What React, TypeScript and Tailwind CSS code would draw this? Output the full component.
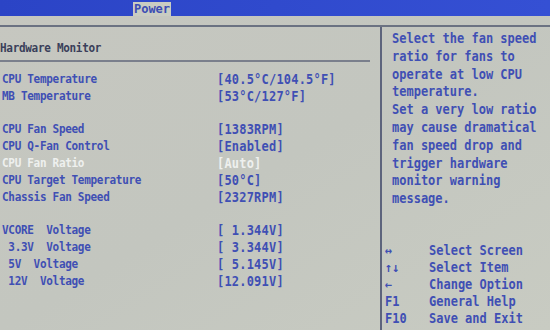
const rows: ([string, string, boolean?] | null)[] = [
  ['CPU Temperature', '[40.5°C/104.5°F]'],
  ['MB Temperature', '[53°C/127°F]'],
  null,
  ['CPU Fan Speed', '[1383RPM]'],
  ['CPU Q-Fan Control', '[Enabled]'],
  ['CPU Fan Ratio', '[Auto]', true],
  ['CPU Target Temperature', '[50°C]'],
  ['Chassis Fan Speed', '[2327RPM]'],
  null,
  ['VCORE  Voltage', '[ 1.344V]'],
  [' 3.3V  Voltage', '[ 3.344V]'],
  [' 5V  Voltage', '[ 5.145V]'],
  [' 12V  Voltage', '[12.091V]'],
];

const help = [
  'Select the fan speed',
  'ratio for fans to',
  'operate at low CPU',
  'temperature.',
  'Set a very low ratio',
  'may cause dramatical',
  'fan speed drop and',
  'trigger hardware',
  'monitor warning',
  'message.',
];

const keys: [string, string][] = [
  ['↔', 'Select Screen'],
  ['↑↓', 'Select Item'],
  ['←', 'Change Option'],
  ['F1', 'General Help'],
  ['F10', 'Save and Exit'],
];

export default function App() {
  return (
    <div
      className="w-[550px] h-[330px] overflow-hidden flex flex-col bg-gradient-to-br from-[#c6c7c0] via-[#c3c6bf] to-[#c8cbc2] text-[#3f4fb4] font-bold"
      style={{ fontFamily: '"DejaVu Sans Mono", "Liberation Mono", monospace' }}
    >
      {/* menu bar */}
      <div className="h-[16px] bg-gradient-to-r from-[#2b44c6] to-[#3550d4] flex">
        <div className="ml-[133px] w-[38px] mt-[2px] bg-[#c9ccc2] text-[#3c4db4] text-[12px] leading-[14px] text-center">
          Power
        </div>
      </div>
      <div className="mt-[9px] h-[2px] bg-[#6b7282]" />

      <div className="flex flex-1">
        {/* left panel */}
        <div className="w-[380px] flex flex-col">
          <div className="pt-[12px] text-[11px] leading-[17px] tracking-[-0.3px] text-[#3a3f5a] scale-y-110 origin-left">
            Hardware Monitor
          </div>
          <div className="mt-[4px] mr-[10px] h-[2px] bg-[#7a7f8c]" />
          <div className="mt-[10px] flex flex-col">
            {rows.map((r, i) =>
              r ? (
                <div key={i} className={`flex h-[16.8px] items-center scale-y-110 ${r[2] ? 'text-[#eef0ee]' : ''}`}>
                  <span className="w-[217px] pl-[2px] text-[11px] tracking-[-0.3px] whitespace-pre">{r[0]}</span>
                  <span className="text-[12px] tracking-[0.2px] whitespace-pre">{r[1]}</span>
                </div>
              ) : (
                <div key={i} className="h-[16.8px]" />
              ),
            )}
          </div>
        </div>

        <div className="w-[2px] bg-[#5d647c]" />

        {/* help panel */}
        <div className="flex-1 flex flex-col justify-between pl-[10px] pt-[4px] pb-[2px] text-[12px]">
          <div className="flex flex-col leading-[17.8px]">
            {help.map((h) => (
              <div key={h} className="whitespace-pre scale-y-110">{h}</div>
            ))}
          </div>
          <div className="flex flex-col leading-[17px] -ml-[9px]">
            {keys.map(([k, t]) => (
              <div key={t} className="flex scale-y-110">
                <span className="w-[46px] pl-[2px]">{k}</span>
                <span>{t}</span>
              </div>
            ))}
          </div>
        </div>
      </div>
    </div>
  );
}
